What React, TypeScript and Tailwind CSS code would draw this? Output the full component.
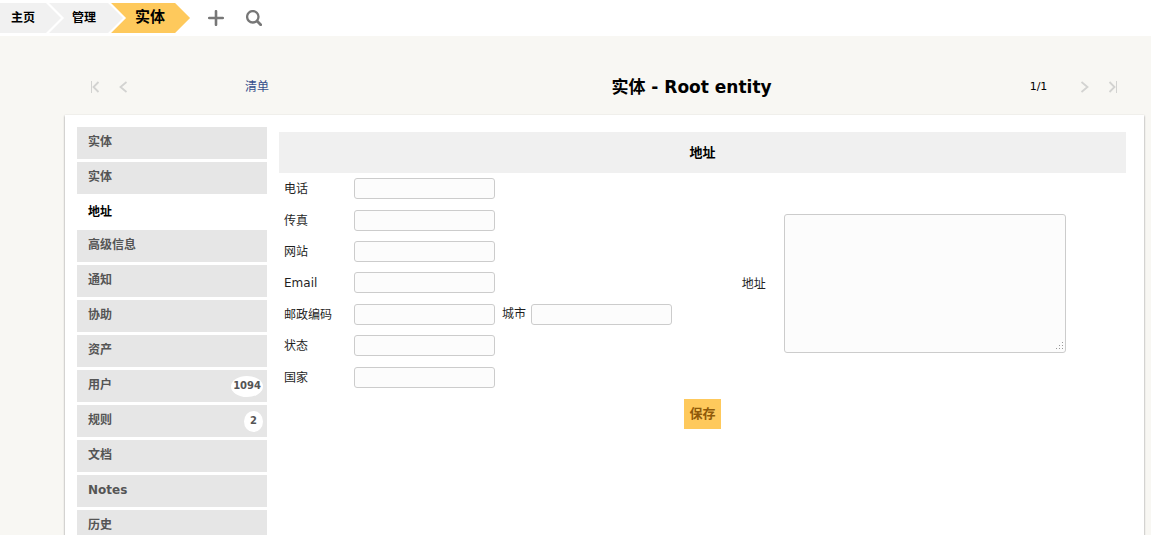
import { useState } from 'react';

interface Tab {
  id: string;
  label: string;
  count?: number;
}

const tabs: Tab[] = [
  { id: 'entity', label: '实体' },
  { id: 'entities', label: '实体' },
  { id: 'address', label: '地址' },
  { id: 'advanced', label: '高级信息' },
  { id: 'notification', label: '通知' },
  { id: 'assistance', label: '协助' },
  { id: 'assets', label: '资产' },
  { id: 'users', label: '用户', count: 1094 },
  { id: 'rules', label: '规则', count: 2 },
  { id: 'documents', label: '文档' },
  { id: 'notes', label: 'Notes' },
  { id: 'history', label: '历史' },
];

const fields = [
  { id: 'phone', label: '电话' },
  { id: 'fax', label: '传真' },
  { id: 'website', label: '网站' },
  { id: 'email', label: 'Email' },
  { id: 'postcode', label: '邮政编码' },
  { id: 'state', label: '状态' },
  { id: 'country', label: '国家' },
];

const inputClass = 'h-[21px] w-[141px] rounded-[3px] border border-[#ccc] bg-[#fcfcfc] px-1 outline-none focus:border-[#999]';

const Breadcrumb = () => (
  <nav className="flex h-9 items-center bg-white font-bold text-black">
    <a
      href="#home"
      className="flex h-[30px] items-center bg-[#f1f1f1] pr-[26px] pl-[11px] [clip-path:polygon(0_0,calc(100%-15px)_0,100%_50%,calc(100%-15px)_100%,0_100%)]"
    >
      主页
    </a>
    <a
      href="#admin"
      className="-ml-3 flex h-[30px] items-center bg-[#f1f1f1] pr-[27px] pl-[23px] [clip-path:polygon(0_0,calc(100%-15px)_0,100%_50%,calc(100%-15px)_100%,0_100%,15px_50%)]"
    >
      管理
    </a>
    <a
      href="#entity"
      className="-ml-3 flex h-[30px] items-center bg-[#fec95c] pr-[25px] pl-6 text-[15px] [clip-path:polygon(0_0,calc(100%-15px)_0,100%_50%,calc(100%-15px)_100%,0_100%,15px_50%)]"
    >
      实体
    </a>
    <button type="button" aria-label="添加" className="ml-[18px] text-[#777]">
      <svg className="h-4 w-4" viewBox="0 0 16 16" fill="none" stroke="currentColor" strokeWidth="2.6" strokeLinecap="round">
        <path d="M8 1.2v13.6M1.2 8h13.6" />
      </svg>
    </button>
    <button type="button" aria-label="搜索" className="ml-[22px] text-[#777]">
      <svg className="h-4 w-4" viewBox="0 0 16 16" fill="none" stroke="currentColor" strokeLinecap="round">
        <circle cx="6.8" cy="6.8" r="5.7" strokeWidth="2.3" />
        <path d="M11.3 11.3l3.4 3.4" strokeWidth="2.8" />
      </svg>
    </button>
  </nav>
);

const PagerButton = ({ label, path, bar }: { label: string; path: string; bar?: string }) => (
  <button type="button" aria-label={label} className="flex w-7 justify-center text-[#d3d3d1]">
    <svg className="h-3 w-2" viewBox="0 0 8 12" fill="none" stroke="currentColor" overflow="visible">
      <path d={path} strokeWidth="1.8" />
      {bar && <path d={bar} strokeWidth="1" />}
    </svg>
  </button>
);

const App = () => {
  const [activeTab, setActiveTab] = useState('address');

  return (
    <div className="h-screen overflow-hidden bg-[#f8f7f3] font-['DejaVu_Sans','Noto_Sans_CJK_SC',sans-serif] text-xs text-[#1f1f1f]">
      <Breadcrumb />

      {/* Record navigation */}
      <div className="mr-[7px] ml-[65px] flex h-[79px] items-center pt-[23px] pr-[17px] pl-4">
        <PagerButton label="第一个" path="M7.5 1L2.5 6l5 5" bar="M.5 0v12" />
        <PagerButton label="上一个" path="M7.5 1L1.5 6l6 5" />
        <div className="w-60 text-center">
          <a href="#list" className="text-[#36508c] hover:underline">清单</a>
        </div>
        <h1 className="flex-1 text-center text-[17px] font-bold text-black">实体 - Root entity</h1>
        <span className="w-[65px] text-center text-[11px] text-black">1/1</span>
        <PagerButton label="下一个" path="M.5 1l6 5-6 5" />
        <PagerButton label="最后一个" path="M.5 1l5 5-5 5" bar="M7.5 0v12" />
      </div>

      <main className="mr-[7px] ml-[65px] flex items-start gap-3 bg-white pt-3 pr-[18px] pb-3 pl-3 shadow-[0_1px_2px_0_#888]">
        <ul className="flex w-[190px] shrink-0 flex-col gap-[3px]">
          {tabs.map((tab) => {
            const active = tab.id === activeTab;
            return (
              <li key={tab.id}>
                <button
                  type="button"
                  onClick={() => setActiveTab(tab.id)}
                  className={`flex w-full justify-between pr-1 pl-[11px] text-left font-bold ${
                    active ? 'h-[30px] items-center bg-white text-black' : 'h-8 items-start bg-[#e6e6e6] pt-[6px] text-[#555]'
                  }`}
                >
                  <span className="leading-[18px]">{tab.label}</span>
                  {tab.count !== undefined && (
                    <span className="flex h-[21px] min-w-[19px] items-center justify-center rounded-[50%] bg-white px-[2px] pb-[2px] text-[10px]">
                      {tab.count}
                    </span>
                  )}
                </button>
              </li>
            );
          })}
        </ul>

        <form className="mt-[5px] min-w-0 flex-1" onSubmit={(e) => e.preventDefault()}>
          <h2 className="bg-[#f0f0f0] text-center text-[13px] leading-[41px] font-bold text-black">地址</h2>

          <div className="flex h-[220px]">
            <div className="grid flex-[460] grid-rows-7 pl-[5px]">
              {fields.map((field) => (
                <div key={field.id} className="flex items-center">
                  <label htmlFor={field.id} className="w-[70px] shrink-0 pt-px">{field.label}</label>
                  <input id={field.id} type="text" className={inputClass} />
                  {field.id === 'postcode' && (
                    <>
                      <label htmlFor="city" className="mr-[5px] ml-[7px] shrink-0">城市</label>
                      <input id="city" type="text" className={inputClass} />
                    </>
                  )}
                </div>
              ))}
            </div>

            <div className="flex flex-[386] items-center gap-[18px]">
              <label htmlFor="address" className="shrink-0 pt-px">地址</label>
              <div className="relative">
                <textarea
                  id="address"
                  className="block h-[139px] w-[282px] resize-none rounded-[3px] border border-[#ccc] bg-[#fcfcfc] p-1 outline-none focus:border-[#999]"
                />
                <svg className="pointer-events-none absolute right-[3px] bottom-[3px] h-2 w-2 text-[#999]" viewBox="0 0 8 8" fill="currentColor">
                  <path d="M7 0h1v1H7zM4 3h1v1H4zM7 3h1v1H7zM1 6h1v1H1zM4 6h1v1H4zM7 6h1v1H7z" />
                </svg>
              </div>
            </div>
          </div>

          <div className="mt-[6px] text-center">
            <button type="submit" className="h-[30px] bg-[#fec95c] px-[5px] text-[13px] font-bold text-[#8f5a0a] hover:bg-[#fdbb30]">
              保存
            </button>
          </div>
        </form>
      </main>
    </div>
  );
};

export default App;
